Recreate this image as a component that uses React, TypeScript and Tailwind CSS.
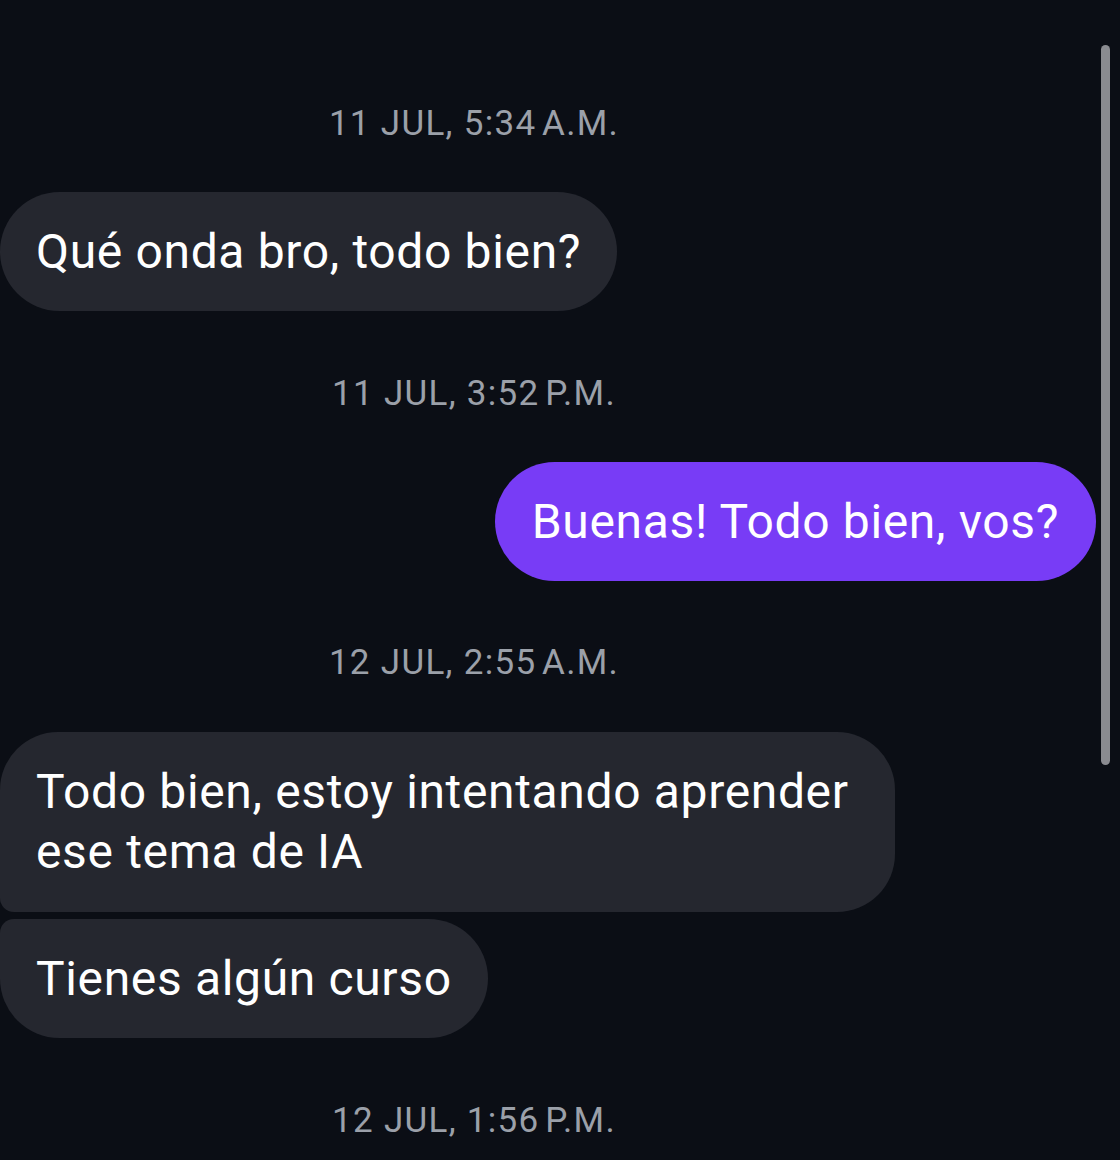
import React from 'react';

const font = { fontFamily: 'Roboto, "Liberation Sans", sans-serif' };

function Stamp({ children, className = '' }: { children: React.ReactNode; className?: string }) {
  return (
    <div className={`w-[948px] text-center text-[35px] leading-[44px] tracking-[1.3px] text-[#9ba0a9] ${className}`}>{children}</div>
  );
}

export default function App() {
  return (
    <div className="relative w-[1120px] h-[1160px] overflow-hidden bg-[#0b0e15] text-white" style={font}>
      {/* scrollbar */}
      <div className="absolute left-[1101px] top-[45px] w-[9px] h-[720px] rounded-full bg-[#8a8b90]" />

      <div className="flex flex-col pt-[102px] text-[48px] tracking-[0.65px]">
        <Stamp>11 JUL, 5:34{'\u202F'}A.M.</Stamp>

        <div className="mt-[46px] self-start rounded-full bg-[#25272f] px-[36px] py-[30px] leading-[59px]">
          Qué onda bro, todo bien?
        </div>

        <Stamp className="mt-[61px]">11 JUL, 3:52{'\u202F'}P.M.</Stamp>

        <div className="mt-[46px] mr-[24px] self-end rounded-full bg-[#783cf6] px-[37px] py-[30px] leading-[59px]">
          Buenas! Todo bien, vos?
        </div>

        <Stamp className="mt-[60px]">12 JUL, 2:55{'\u202F'}A.M.</Stamp>

        <div className="mt-[47px] self-start w-[895px] rounded-[58px] rounded-bl-[14px] bg-[#25272f] px-[36px] py-[30px] leading-[60px]">
          Todo bien, estoy intentando aprender ese tema de IA
        </div>
        <div className="mt-[7px] self-start rounded-[60px] rounded-tl-[14px] bg-[#25272f] px-[36px] py-[30px] leading-[59px]">
          Tienes algún curso
        </div>

        <Stamp className="mt-[61px]">12 JUL, 1:56{'\u202F'}P.M.</Stamp>
      </div>
    </div>
  );
}
